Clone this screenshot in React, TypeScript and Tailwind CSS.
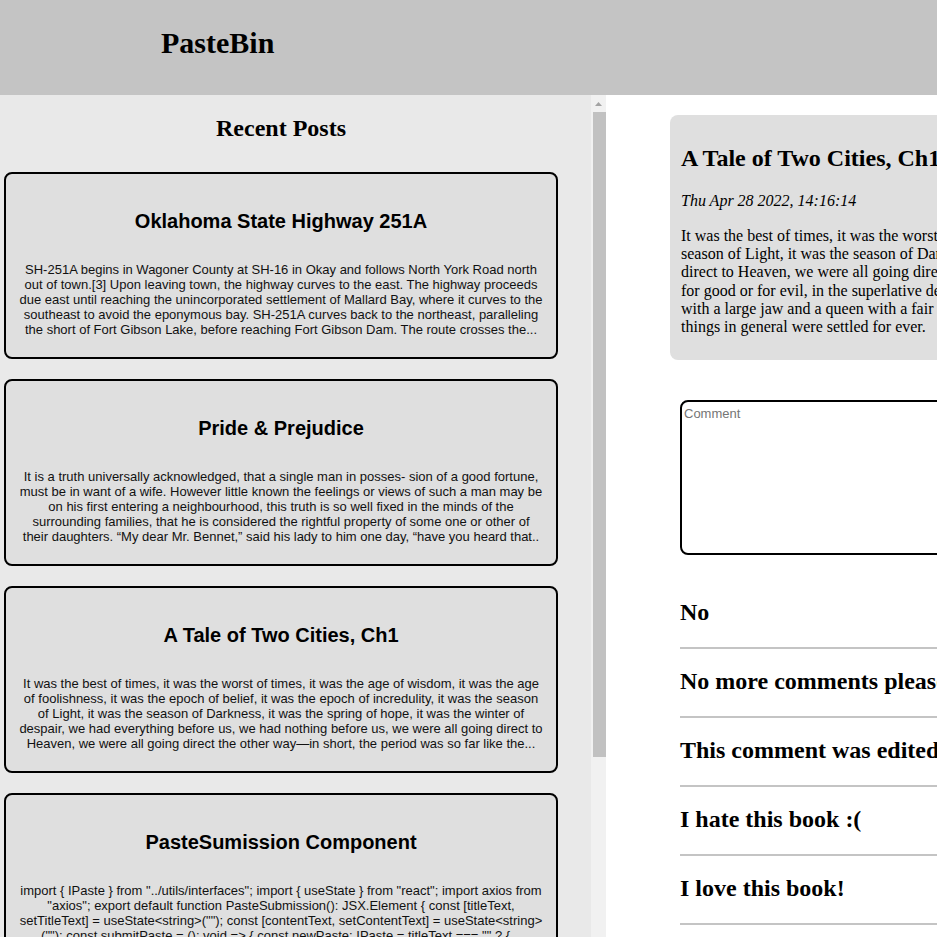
import React from 'react';

const posts = [
  {
    title: 'Oklahoma State Highway 251A',
    body: 'SH-251A begins in Wagoner County at SH-16 in Okay and follows North York Road north out of town.[3] Upon leaving town, the highway curves to the east. The highway proceeds due east until reaching the unincorporated settlement of Mallard Bay, where it curves to the southeast to avoid the eponymous bay. SH-251A curves back to the northeast, paralleling the short of Fort Gibson Lake, before reaching Fort Gibson Dam. The route crosses the...',
  },
  {
    title: 'Pride & Prejudice',
    body: 'It is a truth universally acknowledged, that a single man in posses- sion of a good fortune, must be in want of a wife. However little known the feelings or views of such a man may be on his first entering a neighbourhood, this truth is so well fixed in the minds of the surrounding families, that he is considered the rightful property of some one or other of their\u00a0daughters. \u201cMy dear Mr. Bennet,\u201d said his lady to him one day, \u201chave you heard that..',
  },
  {
    title: 'A Tale of Two Cities, Ch1',
    body: 'It was the best of times, it was the worst of times, it was the age of wisdom, it was the age of foolishness, it was the epoch of belief, it was the epoch of incredulity, it was the season of Light, it was the season of Darkness, it was the spring of hope, it was the winter of despair, we had everything before us, we had nothing before us, we were all going direct to Heaven, we were all going direct the other way\u2014in short, the period was so far like the...',
  },
  {
    title: 'PasteSumission Component',
    body: 'import { IPaste } from "../utils/interfaces"; import { useState } from "react"; import axios from "axios"; export default function PasteSubmission(): JSX.Element { const [titleText, setTitleText] = useState<string>(""); const [contentText, setContentText] = useState<string>(""); const submitPaste = (): void => { const newPaste: IPaste = titleText === "" ? {...',
  },
];

const selectedLines = [
  'It was the best of times, it was the worst of times, it was the age of wisdom, it was the age of foolishness, it was the epoch of belief, it was the epoch of incredulity, it was the',
  'season of Light, it was the season of Darkness, it was the spring of hope, it was the winter of despair, we had everything before us, we had nothing before us, we were all going',
  'direct to Heaven, we were all going direct the other way\u2014in short, the period was so far like the present period, that some of its noisiest authorities insisted on its being received,',
  'for good or for evil, in the superlative degree of comparison only. There were a king with a large jaw and a queen with a plain face, on the throne of England; there were a king',
  'with a large jaw and a queen with a fair face, on the throne of France. In both countries it was clearer than crystal to the lords of the State preserves of loaves and fishes, that',
  'things in general were settled for ever.',
];

const comments = ['No', 'No more comments please', 'This comment was edited', 'I hate this book :(', 'I love this book!'];

export default function App() {
  return (
    <div className="h-[937px] overflow-hidden flex flex-col font-['Liberation_Serif',serif] text-black">
      {/* Header */}
      <header className="h-[95px] shrink-0 bg-[#c4c4c4] pl-[161px] pt-[26px]">
        <h1 className="text-[30px] leading-[34px] font-bold">PasteBin</h1>
      </header>

      <div className="flex flex-1 min-h-0">
        {/* Recent posts column */}
        <aside className="w-[606px] shrink-0 bg-[#e9e9e9] flex">
          <div className="w-[562px] flex flex-col">
            <h2 className="text-center text-[24px] leading-[28px] font-bold pt-[19px]">Recent Posts</h2>
            <div className="mt-[30px] flex flex-col gap-[20px]">
              {posts.map((post) => (
                <div
                  key={post.title}
                  className="ml-1 w-[554px] h-[187px] shrink-0 border-2 border-black rounded-lg bg-[#dfdfdf] px-[11px] pt-[36px] pb-[20px] text-center font-['Liberation_Sans',Arial,sans-serif]"
                >
                  <h3 className="text-[20px] leading-[23px] font-bold">{post.title}</h3>
                  <p className="mt-[29px] text-[13px] leading-[15px] text-[#111] line-clamp-5">{post.body}</p>
                </div>
              ))}
            </div>
          </div>
          <div className="flex-1" />
          {/* scrollbar */}
          <div className="w-[15px] shrink-0 bg-[#f1f1f1] flex flex-col">
            <div className="h-[17px] flex items-center justify-center">
              <svg width="7" height="4" viewBox="0 0 7 4">
                <path d="M3.5 0 L7 4 L0 4 Z" fill="#a3a3a3" />
              </svg>
            </div>
            <div className="ml-[2px] h-[645px] bg-[#c1c1c1]" />
          </div>
        </aside>

        {/* Selected post */}
        <main className="flex-1 bg-white overflow-hidden pl-[64px] pt-[20px]">
          <div className="w-[1100px]">
            <div className="bg-[#dfdfdf] rounded-lg px-[11px] pt-[29px] pb-[24px]">
              <h2 className="text-[24px] leading-[28px] font-bold">A Tale of Two Cities, Ch1</h2>
              <p className="mt-[20px] text-[16px] leading-[18px] italic">Thu Apr 28 2022, 14:16:14</p>
              <p className="mt-[17px] text-[16px] leading-[18.2px] whitespace-nowrap">
                {selectedLines.map((line, i) => (
                  <React.Fragment key={i}>
                    {line}
                    {i < selectedLines.length - 1 && <br />}
                  </React.Fragment>
                ))}
              </p>
            </div>

            <textarea
              placeholder="Comment"
              className="block ml-[10px] mt-[40px] w-[1000px] h-[155px] border-2 border-black rounded-lg p-[2px] text-[13px] font-['Liberation_Sans',Arial,sans-serif] placeholder:text-[#757575] resize-none outline-none"
            />

            <ul className="ml-[10px] mt-[43px]">
              {comments.map((c, i) => (
                <li key={c} className={`border-b-2 border-[#c4c4c4] pb-[21px] ${i === 0 ? '' : 'pt-[18px]'}`}>
                  <h2 className="text-[24px] leading-[28px] font-bold">{c}</h2>
                </li>
              ))}
            </ul>
          </div>
        </main>
      </div>
    </div>
  );
}
